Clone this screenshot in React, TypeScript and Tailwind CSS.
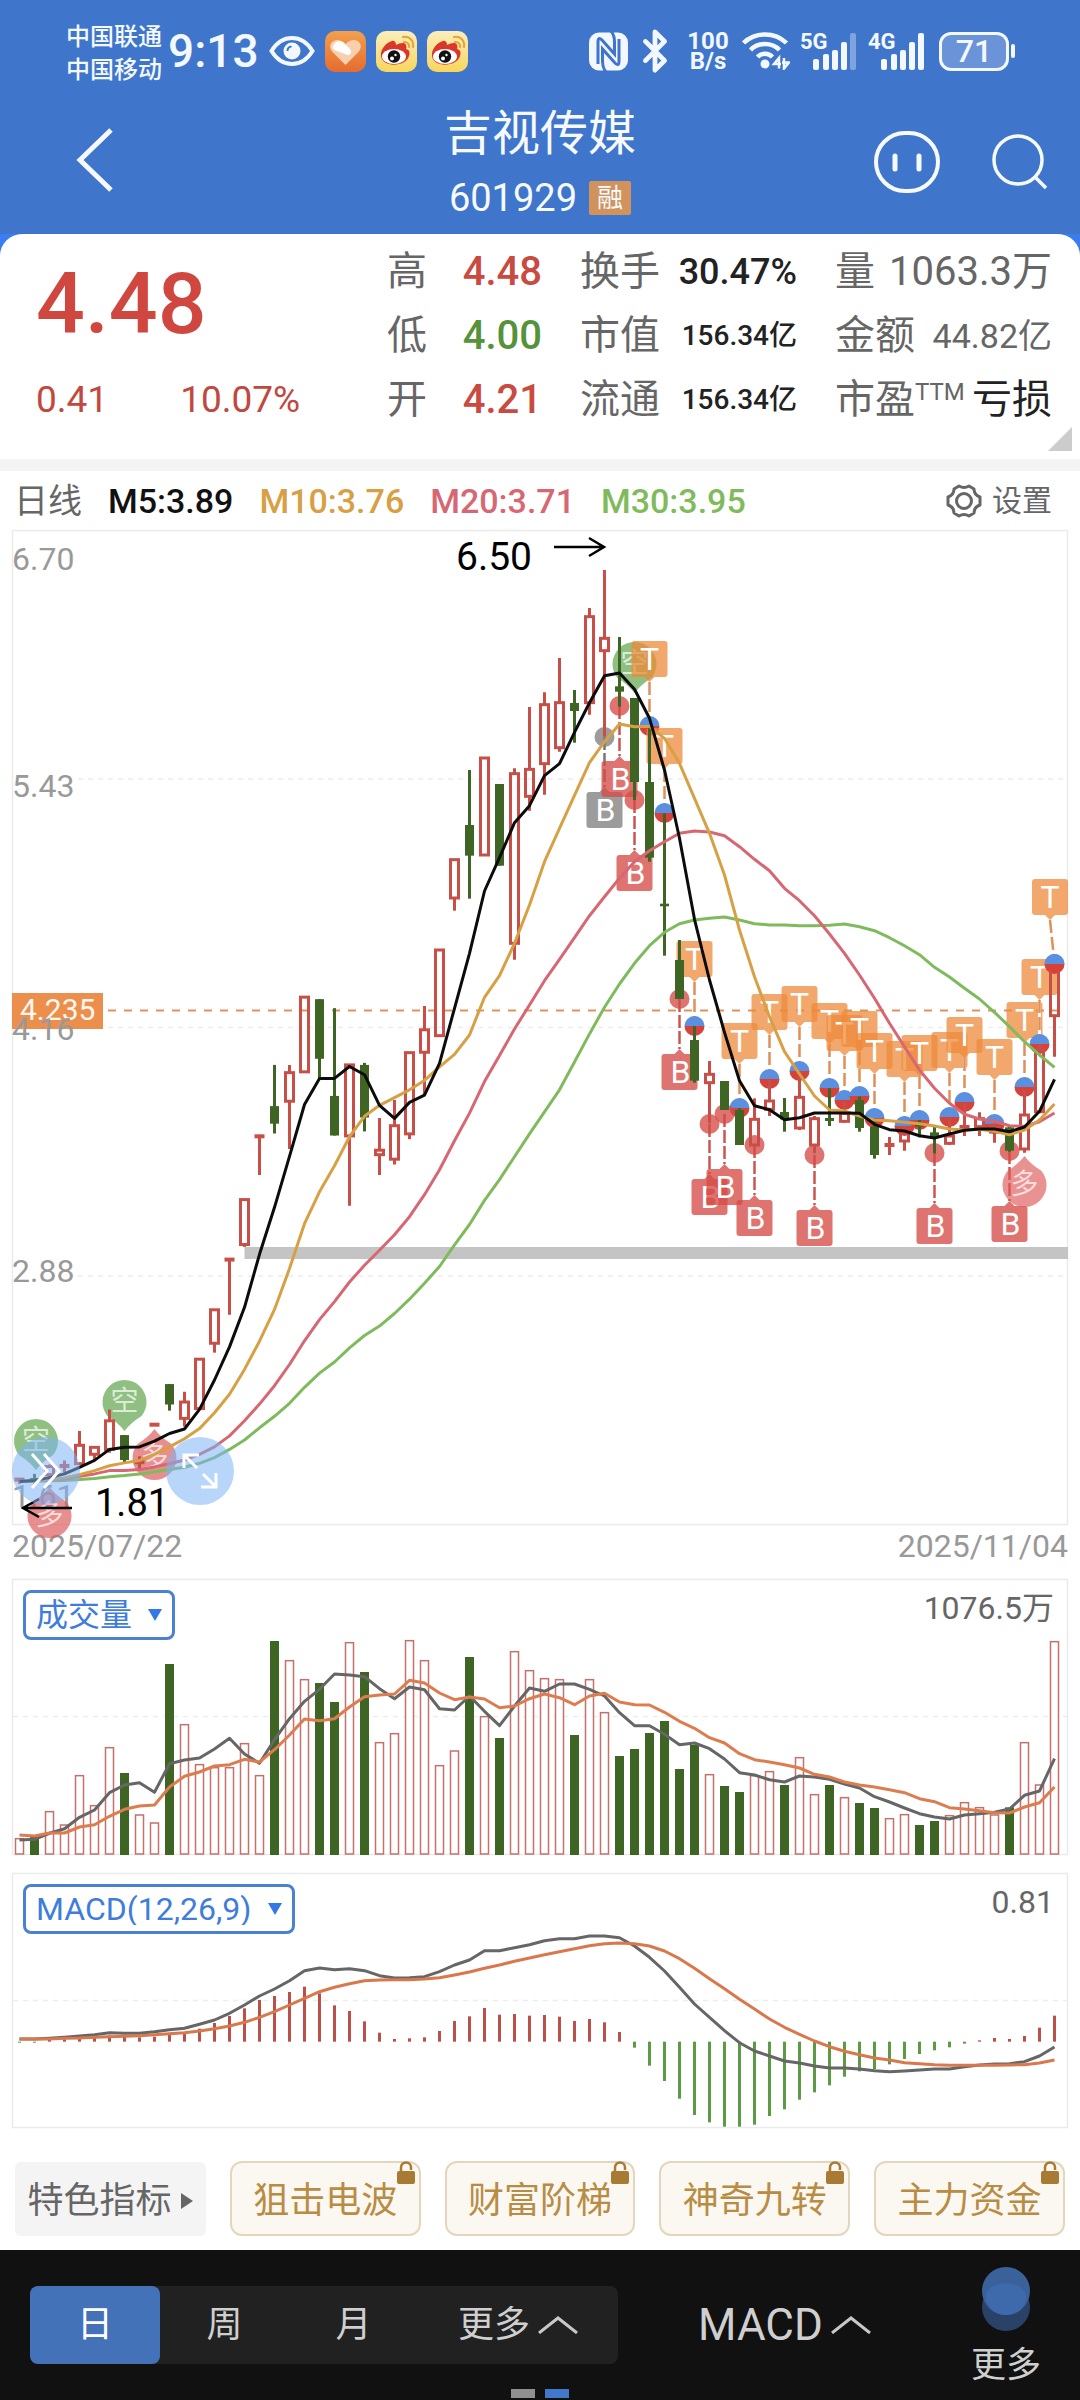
import React from "react";
import { LuBluetooth } from "react-icons/lu";

type Candle = [number, number, number, number, number]; // up(1)/down(0), high, body top, body bottom, low

const STEP = 15;
const cx = (i: number) => 19.5 + STEP * i;

const a = (v: number) => 940 + v / 2.45;
const b = (v: number) => 520 + v / 3;
const c = (v: number) => 880 + v / 3;

const scaled = (f: (v: number) => number, rows: Candle[]): Candle[] =>
  rows.map(([u, h, t, o, l]) => [u, f(h), f(t), f(o), f(l)]);

const CANDLES: Candle[] = [
  ...scaled(a, [
    [1, 1318, 1319, 1325, 1332], [0, 1308, 1318, 1324, 1332], [1, 1285, 1290, 1310, 1318], [1, 1275, 1286, 1291, 1305],
    [1, 1203, 1238, 1283, 1286], [1, 1240, 1243, 1260, 1272], [1, 1150, 1178, 1248, 1256], [0, 1213, 1213, 1274, 1280],
    [1, 1265, 1276, 1283, 1298], [1, 1184, 1184, 1191, 1191], [0, 1088, 1088, 1138, 1153], [1, 1107, 1132, 1172, 1192],
    [1, 1027, 1027, 1148, 1148], [1, 906, 906, 988, 1011], [1, 779, 780, 786, 918], [1, 636, 636, 746, 752],
    [1, 477, 478, 484, 576], [0, 306, 407, 450, 474], [1, 306, 325, 395, 512], [1, 140, 140, 323, 323],
    [0, 145, 145, 291, 340], [0, 167, 382, 479, 479], [1, 304, 306, 480, 651], [0, 301, 306, 435, 469],
    [1, 436, 515, 526, 576], [1, 392, 455, 537, 550], [1, 276, 276, 475, 488], [1, 162, 220, 275, 380],
  ]),
  ...scaled(b, [
    [1, 1290, 1290, 1547, 1547], [1, 1019, 1019, 1134, 1172], [0, 750, 915, 1007, 1136], [1, 714, 714, 1005, 1005],
    [0, 792, 792, 1037, 1037], [1, 745, 761, 1270, 1319], [1, 561, 748, 829, 872], [1, 517, 554, 731, 824],
    [1, 414, 548, 683, 695], [0, 510, 549, 573, 668], [1, 264, 290, 548, 584], [1, 150, 355, 392, 650],
    [0, 351, 499, 515, 560], [0, 534, 534, 786, 840], [0, 620, 786, 1013, 1025], [0, 880, 1151, 1159, 1307],
  ]),
  ...scaled(c, [
    [0, 180, 240, 357, 357], [0, 438, 480, 602, 608], [1, 543, 583, 608, 730], [0, 603, 603, 690, 690],
    [0, 685, 690, 795, 795], [1, 655, 718, 795, 795], [1, 600, 663, 688, 708], [0, 654, 696, 718, 755],
    [1, 575, 652, 744, 750], [1, 708, 716, 795, 820], [0, 625, 714, 723, 738], [1, 665, 700, 724, 728],
    [0, 650, 660, 744, 755], [0, 715, 740, 825, 836], [1, 771, 792, 798, 825], [1, 740, 758, 783, 812],
    [0, 720, 732, 740, 772], [0, 740, 757, 772, 820], [1, 715, 768, 790, 795], [1, 670, 738, 744, 768],
    [1, 697, 716, 740, 768], [1, 730, 742, 756, 788], [0, 735, 742, 812, 815], [1, 630, 705, 807, 818],
    [1, 495, 510, 695, 700], [1, 250, 260, 407, 530],
  ]),
];

const pts = (f: (v: number) => number, start: number, vs: number[]): [number, number][] =>
  vs.map((v, i) => [cx(start + i), f(v)]);
const path = (p: [number, number][]) => p.map(([x, y]) => `${x},${y.toFixed(1)}`).join(" ");

const MA5 = path([
  ...pts(a, 0, [1327, 1324, 1317, 1308, 1292, 1275, 1248, 1243, 1242, 1228, 1209, 1198, 1150, 1078, 997, 900, 770, 655, 530, 403, 339, 339, 310, 330, 405, 437, 398, 380, 302]),
  ...pts(b, 29, [1465, 1300, 1113, 1013, 908, 857, 767, 731, 637, 548, 467, 459, 508, 595, 750, 955, 1198]),
  ...pts(c, 46, [300, 457, 602, 677, 689, 719, 713, 699, 699, 699, 700, 733, 749, 753, 767, 774, 762, 751, 747, 747, 755, 741, 694, 598]),
]);
const MA10 = path([
  ...pts(a, 0, [1327, 1325, 1322, 1318, 1310, 1300, 1288, 1281, 1275, 1260, 1242, 1222, 1197, 1158, 1113, 1052, 983, 905, 805, 695, 617, 553, 482, 432, 405, 386, 367, 344, 311, 280]),
  ...pts(b, 30, [1545, 1432, 1367, 1270, 1155, 1025, 925, 826, 728, 665, 612, 620, 619, 655, 730, 835, 940, 1065]),
  ...pts(c, 48, [150, 290, 410, 515, 582, 648, 690, 693, 708, 720, 722, 727, 731, 738, 747, 750, 748, 754, 764, 750, 720, 672]),
]);
const MA20 = path([
  ...pts(a, 0, [1327, 1325, 1323, 1320, 1314, 1308, 1300, 1300, 1297, 1291, 1283, 1274, 1260, 1242, 1215, 1178, 1137, 1092, 1040, 982, 930, 886, 838, 797, 760, 722, 678, 624, 563, 492, 424, 347, 283, 218]),
  ...pts(b, 34, [1455, 1382, 1318, 1253, 1187, 1130, 1075, 1025, 992, 965, 940, 933, 936, 947, 980, 1018, 1052]),
  ...pts(c, 51, [25, 62, 107, 162, 220, 285, 355, 430, 500, 570, 625, 670, 703, 717, 724, 737, 739, 725, 699]),
]);
const MA30 = path([
  ...pts(a, 0, [1327, 1326, 1325, 1324, 1322, 1319, 1315, 1312, 1308, 1303, 1297, 1292, 1282, 1268, 1248, 1225, 1195, 1167, 1135, 1096, 1061, 1034, 999, 969, 946, 915, 880, 841, 800, 747, 697, 638, 587, 531, 475, 421, 367, 299, 230, 165]),
  ...pts(b, 40, [1392, 1330, 1277, 1237]),
  ...pts(c, 44, [131, 120, 115, 111, 120, 131, 135, 135, 137, 137, 136, 132, 140, 152, 173, 197, 224, 262, 291, 325, 357, 397, 440, 485, 525, 562]),
]);

const T_MARKS: [number, number][] = [
  [42, 641], [43, 728], [45, 941], [48, 1023], [50, 994], [52, 986], [54, 1003], [55, 1015], [56, 1011], [57, 1033],
  [59, 1041], [60, 1035], [62, 1032], [63, 1017], [65, 1039], [67, 1002], [68, 959], [69, 879],
];
const B_MARKS: [number, number, boolean][] = [
  [39, 737, true], [40, 706, false], [41, 800, false], [44, 999, false], [46, 1124, false], [47, 1114, false],
  [49, 1145, false], [53, 1155, false], [61, 1153, false], [66, 1151, false],
];

const VOL: [number, number][] = [
  [806, 1], [800, 0], [725, 1], [765, 1], [617, 1], [707, 1], [533, 1], [609, 0], [735, 1], [759, 1], [282, 0], [464, 1],
  [584, 1], [593, 1], [593, 1], [521, 1], [617, 1], [213, 0], [272, 1], [329, 1], [339, 0], [396, 0], [218, 1], [306, 0],
  [518, 1], [491, 1], [212, 1], [272, 1], [587, 1], [543, 1], [261, 0], [440, 1], [504, 0], [245, 1], [302, 1], [326, 1],
  [329, 1], [495, 0], [329, 1], [428, 1], [558, 0], [537, 0], [489, 0], [453, 0], [597, 0], [525, 0], [614, 1], [648, 0],
  [666, 0], [617, 1], [605, 1], [645, 0], [563, 1], [674, 1], [645, 0], [683, 1], [699, 0], [714, 0], [746, 1], [734, 1],
  [765, 0], [753, 0], [737, 1], [698, 1], [713, 1], [735, 1], [712, 0], [518, 1], [645, 1], [215, 1],
];
const v = (n: number) => 1570 + n / 3;
const VMA5 = path(pts(v, 0, [810, 808, 790, 776, 742, 720, 668, 645, 638, 667, 581, 570, 564, 537, 505, 552, 580, 509, 446, 394, 358, 312, 315, 320, 356, 386, 351, 359, 416, 420, 378, 424, 467, 408, 354, 364, 342, 342, 358, 378, 428, 467, 467, 493, 524, 519, 536, 567, 608, 615, 629, 636, 618, 621, 628, 642, 654, 680, 696, 714, 731, 741, 747, 735, 731, 727, 717, 676, 663, 566]));
const VMA10 = path(pts(v, 0, [795, 798, 789, 789, 771, 764, 739, 718, 708, 705, 651, 619, 606, 588, 584, 568, 576, 539, 495, 447, 452, 446, 411, 380, 375, 372, 331, 339, 369, 389, 381, 387, 413, 408, 386, 372, 383, 404, 378, 370, 396, 404, 405, 427, 454, 475, 503, 519, 551, 569, 576, 584, 594, 613, 621, 636, 645, 651, 659, 668, 686, 695, 713, 717, 722, 728, 729, 711, 698, 651]));

const m = (n: number) => 1870 + n / 3;
const HIST = [518, 518, 510, 508, 505, 500, 496, 499, 502, 500, 495, 490, 476, 459, 438, 415, 390, 378, 366, 350, 370, 406, 423, 454, 488, 507, 505, 502, 483, 453, 439, 414, 434, 432, 437, 435, 440, 453, 447, 457, 486, 533, 587, 633, 686, 735, 757, 770, 770, 764, 738, 718, 689, 667, 646, 620, 604, 598, 583, 567, 552, 541, 532, 521, 511, 504, 507, 498, 473, 437];
const DIF = path(pts(m, 0, [507, 507, 505, 502, 498, 494, 488, 490, 490, 485, 479, 475, 463, 450, 430, 405, 378, 357, 332, 302, 294, 299, 296, 302, 317, 324, 323, 320, 305, 285, 270, 242, 242, 233, 224, 212, 206, 206, 198, 198, 203, 228, 262, 303, 352, 402, 442, 482, 518, 543, 558, 573, 579, 588, 594, 594, 597, 602, 605, 603, 600, 597, 597, 590, 585, 582, 581, 575, 558, 531]));
const DEA = path(pts(m, 0, [507, 507, 507, 505, 504, 502, 500, 499, 497, 494, 491, 488, 483, 476, 468, 457, 442, 425, 405, 385, 365, 352, 341, 332, 330, 329, 329, 327, 323, 315, 306, 295, 285, 274, 264, 254, 245, 236, 227, 221, 219, 221, 228, 243, 266, 295, 326, 356, 388, 417, 447, 472, 493, 513, 530, 544, 554, 564, 570, 578, 581, 584, 586, 586, 586, 586, 585, 584, 579, 570]));

const GREEN = "#3f6525";
const RED = "#c84f47";

function Drop({ x, cy, word, up, color }: { x: number; cy: number; word: string; up?: boolean; color: string }) {
  const s = up ? -1 : 1;
  const w = up ? 0 : 1;
  return (
    <g>
      <path d={`M${x - 17} ${cy + s * 14}A22 22 0 1 ${w} ${x + 17} ${cy + s * 14}Q${x + 6} ${cy + s * 21} ${x} ${cy + s * 29}Q${x - 6} ${cy + s * 21} ${x - 17} ${cy + s * 14}Z`} fill={color} />
      <text x={x} y={cy + 9} textAnchor="middle" fontSize={28} fill="#fff" fillOpacity={0.7}>{word}</text>
    </g>
  );
}

function PriceChart() {
  return (
    <svg viewBox="0 529 1080 1041" className="block h-auto w-full" role="img" aria-label="日线">
      <rect x={12.5} y={530.5} width={1055} height={994} fill="none" stroke="#ebebeb" strokeWidth={1.5} />
      <g stroke="#ededed" strokeWidth={1.5} strokeDasharray="5 5">
        <path d="M78 779H1067M78 1027.500H1067M78 1276H1067" />
      </g>
      <rect x={244.5} y={1247} width={823.5} height={12} fill="#c4c4c4" />
      <path d="M108 1010.500H1068" stroke="#dd935f" strokeWidth={2} strokeDasharray="8 8" />
      <rect x={12} y={993} width={91} height={36} fill="#ec8f4c" />
      <text x={20} y={1020} fontSize={30} fill="#fff8f0">4.235</text>
      <g fontSize={32} fill="#999">
        <text x={12} y={570}>6.70</text>
        <text x={12} y={797}>5.43</text>
        <text x={12} y={1040}>4.16</text>
        <text x={12} y={1282}>2.88</text>
        <text x={12} y={1507}>1.61</text>
        <text x={12} y={1557}>2025/07/22</text>
        <text x={1068} y={1557} textAnchor="end">2025/11/04</text>
      </g>
      <Drop x={36} cy={1441} word="空" color="rgba(95,165,75,.7)" />
      <Drop x={124.5} cy={1402} word="空" color="rgba(95,165,75,.7)" />
      <Drop x={634.5} cy={664} word="空" color="rgba(95,165,75,.7)" />
      <Drop x={154.5} cy={1458} word="多" up color="rgba(220,90,88,.68)" />
      <Drop x={49.5} cy={1516} word="多" up color="rgba(220,90,88,.68)" />
      {T_MARKS.map(([i, top]) => {
        const x = cx(i);
        const bx = i === 69 ? 1050 : x;
        return (
          <g key={i}>
            <path d={`M${bx} ${top + 41}L${x} ${top + 76}`} stroke="#fff" strokeWidth={3} />
            <path d={`M${bx} ${top + 41}L${x} ${top + 84}`} stroke="#e08f58" strokeWidth={2.5} strokeDasharray="13 4" />
            <path d={`M${x - 10} ${top + 85}a10 10 0 0 1 20 0Z`} fill="#5b8fe0" />
            <path d={`M${x - 10} ${top + 85}a10 10 0 0 0 20 0Z`} fill="#d6423a" />
            <path d={`M${bx - 15} ${top}h30a3 3 0 0 1 3 3v30a3 3 0 0 1 -3 3h-10l-5 5l-5 -5h-10a3 3 0 0 1 -3 -3v-30a3 3 0 0 1 3 -3Z`} fill="#ee8a38" fillOpacity={0.74} />
            <text x={bx} y={top + 29} textAnchor="middle" fontSize={32} fill="#fff">T</text>
          </g>
        );
      })}
      {B_MARKS.map(([i, y, gray]) => {
        const x = cx(i);
        const fill = gray ? "#808080" : "#d54c47";
        return (
          <g key={i}>
            <path d={`M${x} ${y}V${y + 50}`} stroke={gray ? "#777" : "#cb5550"} strokeWidth={2.5} strokeDasharray="13 3" />
            <circle cx={x} cy={y} r={10} fill={fill} fillOpacity={0.78} />
            <path d={`M${x - 15} ${y + 55}h10l5 -5l5 5h10a3 3 0 0 1 3 3v30a3 3 0 0 1 -3 3h-30a3 3 0 0 1 -3 -3v-30a3 3 0 0 1 3 -3Z`} fill={fill} fillOpacity={0.78} />
            <text x={x + 1} y={y + 84} textAnchor="middle" fontSize={32} fill="#fff">B</text>
          </g>
        );
      })}
      <Drop x={1024.5} cy={1185} word="多" up color="rgba(220,90,88,.66)" />
      {CANDLES.map(([u, h, t, o, l], i) => {
        const x = cx(i);
        return u ? (
          <g key={i} stroke={RED} strokeWidth={3} fill="none">
            <path d={`M${x} ${h}V${t}M${x} ${o}V${l}`} />
            {o - t < 4 ? <path d={`M${x - 5} ${(t + o) / 2}h10`} strokeWidth={4} /> : <rect x={x - 4} y={t} width={8} height={o - t} />}
          </g>
        ) : (
          <g key={i} fill={GREEN}>
            <rect x={x - 1.5} y={h} width={3} height={l - h} />
            <rect x={x - 4.5} y={t} width={9} height={o - t} />
          </g>
        );
      })}
      <circle cx={1054.5} cy={964} r={8} fill="#d6423a" />
      <path d="M1044.500 964a10 10 0 0 1 20 0Z" fill="#5b8fe0" />
      <g fill="none" strokeWidth={3} strokeLinejoin="round">
        <polyline points={MA30} stroke="#7fbb5c" />
        <polyline points={MA20} stroke="#d76772" />
        <polyline points={MA10} stroke="#d7a045" />
        <polyline points={MA5} stroke="#0c0c0c" />
      </g>
      <text x={456} y={570} fontSize={39} fill="#000">6.50</text>
      <path d="M554 547H603M589 538L604 547L589 556" stroke="#000" strokeWidth={2.5} fill="none" />
      <text x={95} y={1516} fontSize={38} fill="#000">1.81</text>
      <path d="M72 1508H24M39 1499L23 1508L39 1517" stroke="#000" strokeWidth={2.5} fill="none" />
    </svg>
  );
}

function VolumeChart() {
  return (
    <svg viewBox="0 1570 1080 294" className="block h-auto w-full" role="img" aria-label="成交量">
      <rect x={12.5} y={1579.5} width={1055} height={275} fill="none" stroke="#ebebeb" strokeWidth={1.5} />
      <path d="M13 1716.500H1067" stroke="#ededed" strokeWidth={1.5} strokeDasharray="5 5" />
      {VOL.map(([t, u], i) =>
        u ? (
          <rect key={i} x={cx(i) - 4} y={v(t)} width={8} height={1854 - v(t)} fill="#fff" stroke="#c4716b" strokeWidth={1.5} />
        ) : (
          <rect key={i} x={cx(i) - 4.5} y={v(t)} width={9} height={1855 - v(t)} fill={GREEN} />
        ),
      )}
      <g fill="none" strokeWidth={3} strokeLinejoin="round">
        <polyline points={VMA5} stroke="#666" />
        <polyline points={VMA10} stroke="#dd7c4e" />
      </g>
    </svg>
  );
}

function MacdChart() {
  return (
    <svg viewBox="0 1864 1080 276" className="block h-auto w-full" role="img" aria-label="MACD">
      <rect x={12.5} y={1873.5} width={1055} height={254} fill="none" stroke="#ebebeb" strokeWidth={1.5} />
      <path d="M13 2000.500H1067" stroke="#ededed" strokeWidth={1.5} strokeDasharray="5 5" />
      {HIST.map((h, i) => (
        <path key={i} d={`M${cx(i)} ${m(515)}V${m(h)}`} stroke={h < 515 ? "#b9504a" : "#5c9a45"} strokeWidth={3} />
      ))}
      <g fill="none" strokeWidth={3} strokeLinejoin="round">
        <polyline points={DIF} stroke="#666" />
        <polyline points={DEA} stroke="#d9784c" />
      </g>
    </svg>
  );
}

function WeiboIcon() {
  return (
    <svg viewBox="0 0 41 41" className="size-[41px]" aria-hidden="true">
      <defs>
        <linearGradient id="wb" x1="0" y1="0" x2="0" y2="1">
          <stop offset="0" stopColor="#fbeebb" />
          <stop offset="1" stopColor="#f8d65c" />
        </linearGradient>
      </defs>
      <rect width="41" height="41" rx="10" fill="url(#wb)" />
      <path d="M5 25C4 18 11 11 16 10C19 9 20 12 20 14C24 12 29 11 30 14C31 16 30 18 30 18C34 19 34 22 33 25C30 36 6 37 5 25Z" fill="#d8372a" />
      <ellipse cx="18" cy="25.500" rx="12" ry="7.500" fill="#fff" />
      <circle cx="18" cy="25.500" r="6.200" fill="#111" />
      <circle cx="16" cy="27.500" r="2" fill="#fff" />
      <circle cx="19.500" cy="24" r="1.200" fill="#fff" />
      <g fill="none" stroke="#eaa03d" strokeWidth="2" strokeLinecap="round">
        <path d="M27 6C33 5 38 9 37 16" />
        <path d="M28 11C31 10.500 33.500 13 33 16" />
      </g>
    </svg>
  );
}

function Signal({ label, weak }: { label: string; weak?: boolean }) {
  return (
    <div className="relative h-[39px] w-[57px]">
      <span className="absolute -top-1 left-0 text-[22px] leading-7 font-bold">{label}</span>
      <svg viewBox="0 0 57 39" className="h-full w-full" fill="#f3f8ff" aria-hidden="true">
        <rect x="13" y="27" width="6" height="11" rx="2" />
        <rect x="23" y="22" width="6" height="16" rx="2" />
        <rect x="32" y="18" width="6" height="20" rx="2" />
        <rect x="41" y="10" width="6" height="28" rx="2" />
        <rect x="50" y="1" width="6" height="37" rx="2" fillOpacity={weak ? 0.35 : 1} />
      </svg>
    </div>
  );
}

function StatusBar() {
  return (
    <div className="flex h-[102px] items-center justify-between pl-[66px] pr-[65px] text-[#f3f8ff]">
      <div className="flex items-center">
        <div className="pt-1.5 text-2xl leading-[33px] font-medium">
          <div>中国联通</div>
          <div>中国移动</div>
        </div>
        <time className="ml-1.5 w-[92px] text-[46px] leading-none font-medium">9:13</time>
        <svg viewBox="0 0 46 30" className="ml-[9px] w-[46px]" aria-hidden="true">
          <path d="M2.500 15C8 6 15 2 23 2S38 6 43.500 15C38 24 31 28 23 28S8 24 2.500 15Z" fill="none" stroke="#f3f8ff" strokeWidth="4" />
          <circle cx="23" cy="15" r="8.500" fill="#f3f8ff" />
          <path d="M18.500 15a4.500 4.500 0 0 1 4 -4.500" fill="none" stroke="#3f76cb" strokeWidth="2" />
        </svg>
        <div className="ml-[10px] flex gap-[10px]">
          <svg viewBox="0 0 41 41" className="size-[41px]" aria-hidden="true">
            <defs>
              <linearGradient id="hb" x1="0" y1="0" x2="0" y2="1">
                <stop offset="0" stopColor="#f2a04c" />
                <stop offset="1" stopColor="#e66b2f" />
              </linearGradient>
            </defs>
            <rect width="41" height="41" rx="10" fill="url(#hb)" />
            <path d="M20.500 34L7.500 21C0 12 12 4 20.500 13C29 4 41 12 33.500 21Z" fill="#f9cfae" />
            <path d="M9 13C12 9 17 9 20 13L25 18C28 22 24 26 20 23L9 19C7 17 7 15 9 13Z" fill="#fff" />
          </svg>
          <WeiboIcon />
          <WeiboIcon />
        </div>
      </div>
      <div className="flex items-center">
        <svg viewBox="0 0 39 39" className="size-[39px]" aria-hidden="true">
          <rect x="0" y="0.500" width="39" height="38" rx="10" fill="#f3f8ff" />
          <g fill="none" stroke="#3f76cb" strokeWidth="3">
            <path d="M9 32V10Q9 4 13 8L25.500 22V10Q25.500 3 22 -1" />
            <path d="M30 7V29Q30 35 26 31L13.500 17V29Q13.500 36 17 40" />
          </g>
        </svg>
        <LuBluetooth className="ml-1 size-[46px]" strokeWidth={2.5} aria-hidden="true" />
        <div className="ml-1.5 w-[48px] text-center text-2xl leading-5 font-bold">
          <div>100</div>
          <div>B/s</div>
        </div>
        <svg viewBox="0 0 48 38" className="ml-2.5 w-[48px]" aria-hidden="true">
          <g fill="none" stroke="#f3f8ff" strokeWidth="4.500">
            <path d="M1.500 11C13 -0.500 33 -0.500 44.500 11" />
            <path d="M8.500 18C16 10 30 10 37.500 18" />
            <path d="M15.500 25C19.500 20.500 26.500 20.500 30.500 25" />
          </g>
          <circle cx="23" cy="32" r="4.500" fill="#f3f8ff" />
          <path d="M37 36.500V26L32 32H39M42 26V36.500L47 30.500H40" fill="none" stroke="#f3f8ff" strokeWidth="2.500" />
        </svg>
        <div className="ml-2.5 flex gap-[11px]">
          <Signal label="5G" weak />
          <Signal label="4G" />
        </div>
        <div className="ml-3.5 flex items-center gap-0.5">
          <div className="flex h-[39px] w-[70px] items-center justify-center rounded-xl border-[3px] border-[#f3f8ff] bg-[#6b94d8] text-[32px] leading-none font-medium">71</div>
          <div className="h-3.5 w-1 rounded bg-[#f3f8ff]" />
        </div>
      </div>
    </div>
  );
}

function Header() {
  return (
    <div className="grid h-[132px] grid-cols-[1fr_auto_1fr] items-start text-[#f6faff]">
      <div className="flex h-[116px] items-center pl-[76px]">
        <button type="button" aria-label="返回" className="w-[38px]">
          <svg viewBox="0 0 38 64" className="w-full" fill="none" stroke="#f6faff" strokeWidth="5">
            <path d="M35 2L4 32L35 62" />
          </svg>
        </button>
      </div>
      <div className="flex flex-col items-center">
        <h1 className="text-[48px] leading-[64px] font-normal">吉视传媒</h1>
        <div className="flex items-center gap-3">
          <span className="text-[38px] leading-[64px]">601929</span>
          <span className="rounded-xs bg-[#d1935b] px-2 text-[26px] leading-[34px]">融</span>
        </div>
      </div>
      <div className="flex h-[120px] items-center justify-end gap-[52px] pr-8">
        <button type="button" aria-label="智能助手">
          <svg viewBox="0 0 66 62" className="w-[66px]" fill="none" stroke="#f6faff" strokeWidth="4">
            <rect x="2" y="2" width="62" height="58" rx="29" />
            <path d="M21 25V38M45 25V38" strokeWidth="5" strokeLinecap="round" />
          </svg>
        </button>
        <button type="button" aria-label="搜索">
          <svg viewBox="0 0 56 56" className="w-14" fill="none" stroke="#f6faff" strokeWidth="3.500">
            <circle cx="26" cy="26" r="24" />
            <path d="M43 43L54 54" />
          </svg>
        </button>
      </div>
    </div>
  );
}

function Pair({ k, children }: { k: React.ReactNode; children: React.ReactNode }) {
  return (
    <div className="flex h-16 items-center justify-between whitespace-nowrap">
      <dt className="text-[40px] leading-none text-[#666]">{k}</dt>
      <dd className="leading-none">{children}</dd>
    </div>
  );
}

function Quote() {
  return (
    <div className="bg-[#3a7df0]">
      <section className="relative grid h-[225px] grid-cols-[1fr_155px_217px_217px] gap-x-[38px] rounded-t-[22px] bg-white pl-9 pr-7 pt-1.5">
        <div className="text-[#cf473e]">
          <div className="flex h-32 items-center text-[86px] leading-none font-medium">4.48</div>
          <div className="flex h-16 items-center gap-[72px] text-[37px] text-[#c0483f]">
            <span>0.41</span>
            <span>10.07%</span>
          </div>
        </div>
        <dl className="text-[40px] font-medium text-[#c94a41] [&_dt]:font-normal">
          <Pair k="高">4.48</Pair>
          <Pair k="低"><span className="text-[#55923a]">4.00</span></Pair>
          <Pair k="开">4.21</Pair>
        </dl>
        <dl className="text-[28px] font-medium text-[#222] [&_dt]:font-normal">
          <Pair k="换手"><span className="text-4xl">30.47%</span></Pair>
          <Pair k="市值">156.34亿</Pair>
          <Pair k="流通">156.34亿</Pair>
        </dl>
        <dl className="text-[34px] text-[#666]">
          <Pair k="量"><span className="text-[40px]">1063.3万</span></Pair>
          <Pair k="金额">44.82亿</Pair>
          <Pair k={<span className="flex items-start">市盈<small className="text-2xl leading-6">TTM</small></span>}>
            <span className="text-[40px] text-[#222]">亏损</span>
          </Pair>
        </dl>
        <svg viewBox="0 0 24 24" className="absolute right-2 bottom-2 size-6" aria-hidden="true">
          <path d="M24 0V24H0Z" fill="#ccc" />
        </svg>
      </section>
    </div>
  );
}

function Averages() {
  return (
    <div className="flex h-[58px] items-center gap-[26px] pl-3.5 pr-7 pt-0.5 text-[34px] leading-none whitespace-nowrap">
      <span className="text-[#666]">日线</span>
      <span className="font-medium text-[#111]">M5:3.89</span>
      <span className="font-medium text-[#d7a045]">M10:3.76</span>
      <span className="font-medium text-[#d76772]">M20:3.71</span>
      <span className="font-medium text-[#7fbb5c]">M30:3.95</span>
      <button type="button" className="ml-auto flex items-center gap-2.5 text-[30px] text-[#666]">
        <svg viewBox="0 0 36 36" className="size-9" fill="none" stroke="#666" strokeWidth="3" strokeLinejoin="round" aria-hidden="true">
          <path d="M13 3Q18 6 23 3L28 6Q28 12 34 14V22Q28 24 28 30L23 33Q18 30 13 33L8 30Q8 24 2 22V14Q8 12 8 6Z" />
          <circle cx="18" cy="18" r="7.500" />
        </svg>
        设置
      </button>
    </div>
  );
}

function Picker({ label, options, width }: { label: string; options: string[]; width: string }) {
  return (
    <label className={`absolute left-[23px] top-5 flex h-[50px] items-center rounded-lg border-[3px] border-[#4a82cf] bg-white text-[32px] text-[#3f7ddb] ${width}`}>
      <select aria-label={label} className="h-full w-full appearance-none bg-transparent pl-2.5 leading-none outline-none">
        {options.map((o) => <option key={o}>{o}</option>)}
      </select>
      <svg viewBox="0 0 14 12" className="pointer-events-none absolute right-2.5 w-3.5" aria-hidden="true">
        <path d="M0 0H14L7 12Z" fill="#3478e8" />
      </svg>
    </label>
  );
}

function Caret() {
  return (
    <svg viewBox="0 0 40 18" className="w-10" fill="none" stroke="#c8c8c8" strokeWidth="3" aria-hidden="true">
      <path d="M1 17L20 2L39 17" />
    </svg>
  );
}

const TAGS = ["狙击电波", "财富阶梯", "神奇九转", "主力资金"];

export default function App() {
  return (
    <main className="flex min-h-screen w-full flex-col bg-white font-['Roboto','Noto_Sans_CJK_SC',sans-serif]">
      <header className="bg-[#3f76cb]">
        <StatusBar />
        <Header />
      </header>
      <Quote />
      <div className="h-3 bg-[#f4f4f4]" />
      <Averages />
      <div className="relative">
        <PriceChart />
        <button type="button" aria-label="展开" className="absolute bottom-[65px] left-3 flex size-[68px] items-center justify-center rounded-full bg-[#7db2f5]/55">
          <svg viewBox="0 0 32 38" className="w-8" fill="none" stroke="#fff" strokeWidth="3">
            <path d="M2 2L17 19L2 36M14 2L29 19L14 36" />
          </svg>
        </button>
        <button type="button" aria-label="全屏" className="absolute bottom-[65px] left-[166px] flex size-[68px] items-center justify-center rounded-full bg-[#7db2f5]/55">
          <svg viewBox="0 0 36 36" className="w-9" fill="none" stroke="#fff" strokeWidth="3">
            <path d="M2 15V2H17M2 2L15 15M34 20V34H19M34 34L21 21" />
          </svg>
        </button>
      </div>
      <section className="relative">
        <VolumeChart />
        <Picker label="副图一" options={["成交量"]} width="w-[152px]" />
        <span className="absolute right-[26px] top-5 text-[32px] leading-9 text-[#666]">1076.5万</span>
      </section>
      <section className="relative">
        <MacdChart />
        <Picker label="副图二" options={["MACD(12,26,9)"]} width="w-[272px]" />
        <span className="absolute right-[26px] top-5 text-[32px] leading-9 text-[#666]">0.81</span>
      </section>
      <nav aria-label="特色指标" className="grid grid-cols-5 items-center gap-x-[24px] px-[15px] pt-[21px] pb-3.5 text-4xl whitespace-nowrap">
        <button type="button" className="flex h-[74px] items-center justify-center gap-2.5 rounded-md bg-[#f4f4f4] pt-1 text-[#666]">
          特色指标
          <svg viewBox="0 0 12 16" className="w-3" aria-hidden="true"><path d="M0 0L12 8L0 16Z" fill="#666" /></svg>
        </button>
        {TAGS.map((t) => (
          <button key={t} type="button" className="relative h-[75px] rounded-xl border-2 border-[#e3d6bd] bg-[#fbf8f1] pt-1 text-[#b98c45]">
            {t}
            <svg viewBox="0 0 18 24" className="absolute -top-0.5 right-1 w-[18px]" aria-hidden="true">
              <path d="M4 10V6.500a5 5 0 0 1 10 0V9" fill="none" stroke="#a87a34" strokeWidth="2.500" />
              <rect y="10" width="18" height="13" rx="2" fill="#a87a34" />
            </svg>
          </button>
        ))}
      </nav>
      <footer className="relative flex h-[150px] items-start justify-between bg-[#111] pl-[30px] pr-[39px] text-4xl text-[#cfcfcf]">
        <div className="mt-9 flex h-[78px] rounded-lg bg-[#212121]" role="group" aria-label="周期">
          <button type="button" aria-pressed="true" className="w-[130px] rounded-lg bg-[#4472b9] text-white">日</button>
          <button type="button" aria-pressed="false" className="w-[129px]">周</button>
          <button type="button" aria-pressed="false" className="w-[129px]">月</button>
          <button type="button" className="flex w-[200px] items-center justify-center gap-2">更多<Caret /></button>
        </div>
        <button type="button" className="mt-9 mr-5 flex h-[78px] items-center gap-2 text-[44px]">MACD<Caret /></button>
        <button type="button" className="mt-4 flex flex-col items-center text-[35px] leading-[60px]">
          <svg viewBox="0 0 48 66" className="mb-1 w-12" aria-hidden="true">
            <circle cx="24" cy="41" r="24" fill="#2a4268" />
            <circle cx="24" cy="25" r="24" fill="#3b619b" />
            <path d="M4.500 27C10 14 38 14 43.500 27C47 37 38 49 24 49S1 37 4.500 27Z" fill="#3e69aa" />
          </svg>
          更多
        </button>
        <div className="absolute bottom-0.5 left-1/2 flex -translate-x-[29px] gap-2.5" aria-hidden="true">
          <span className="h-[9px] w-6 bg-[#909090]" />
          <span className="h-[9px] w-6 bg-[#4178cc]" />
        </div>
      </footer>
    </main>
  );
}
